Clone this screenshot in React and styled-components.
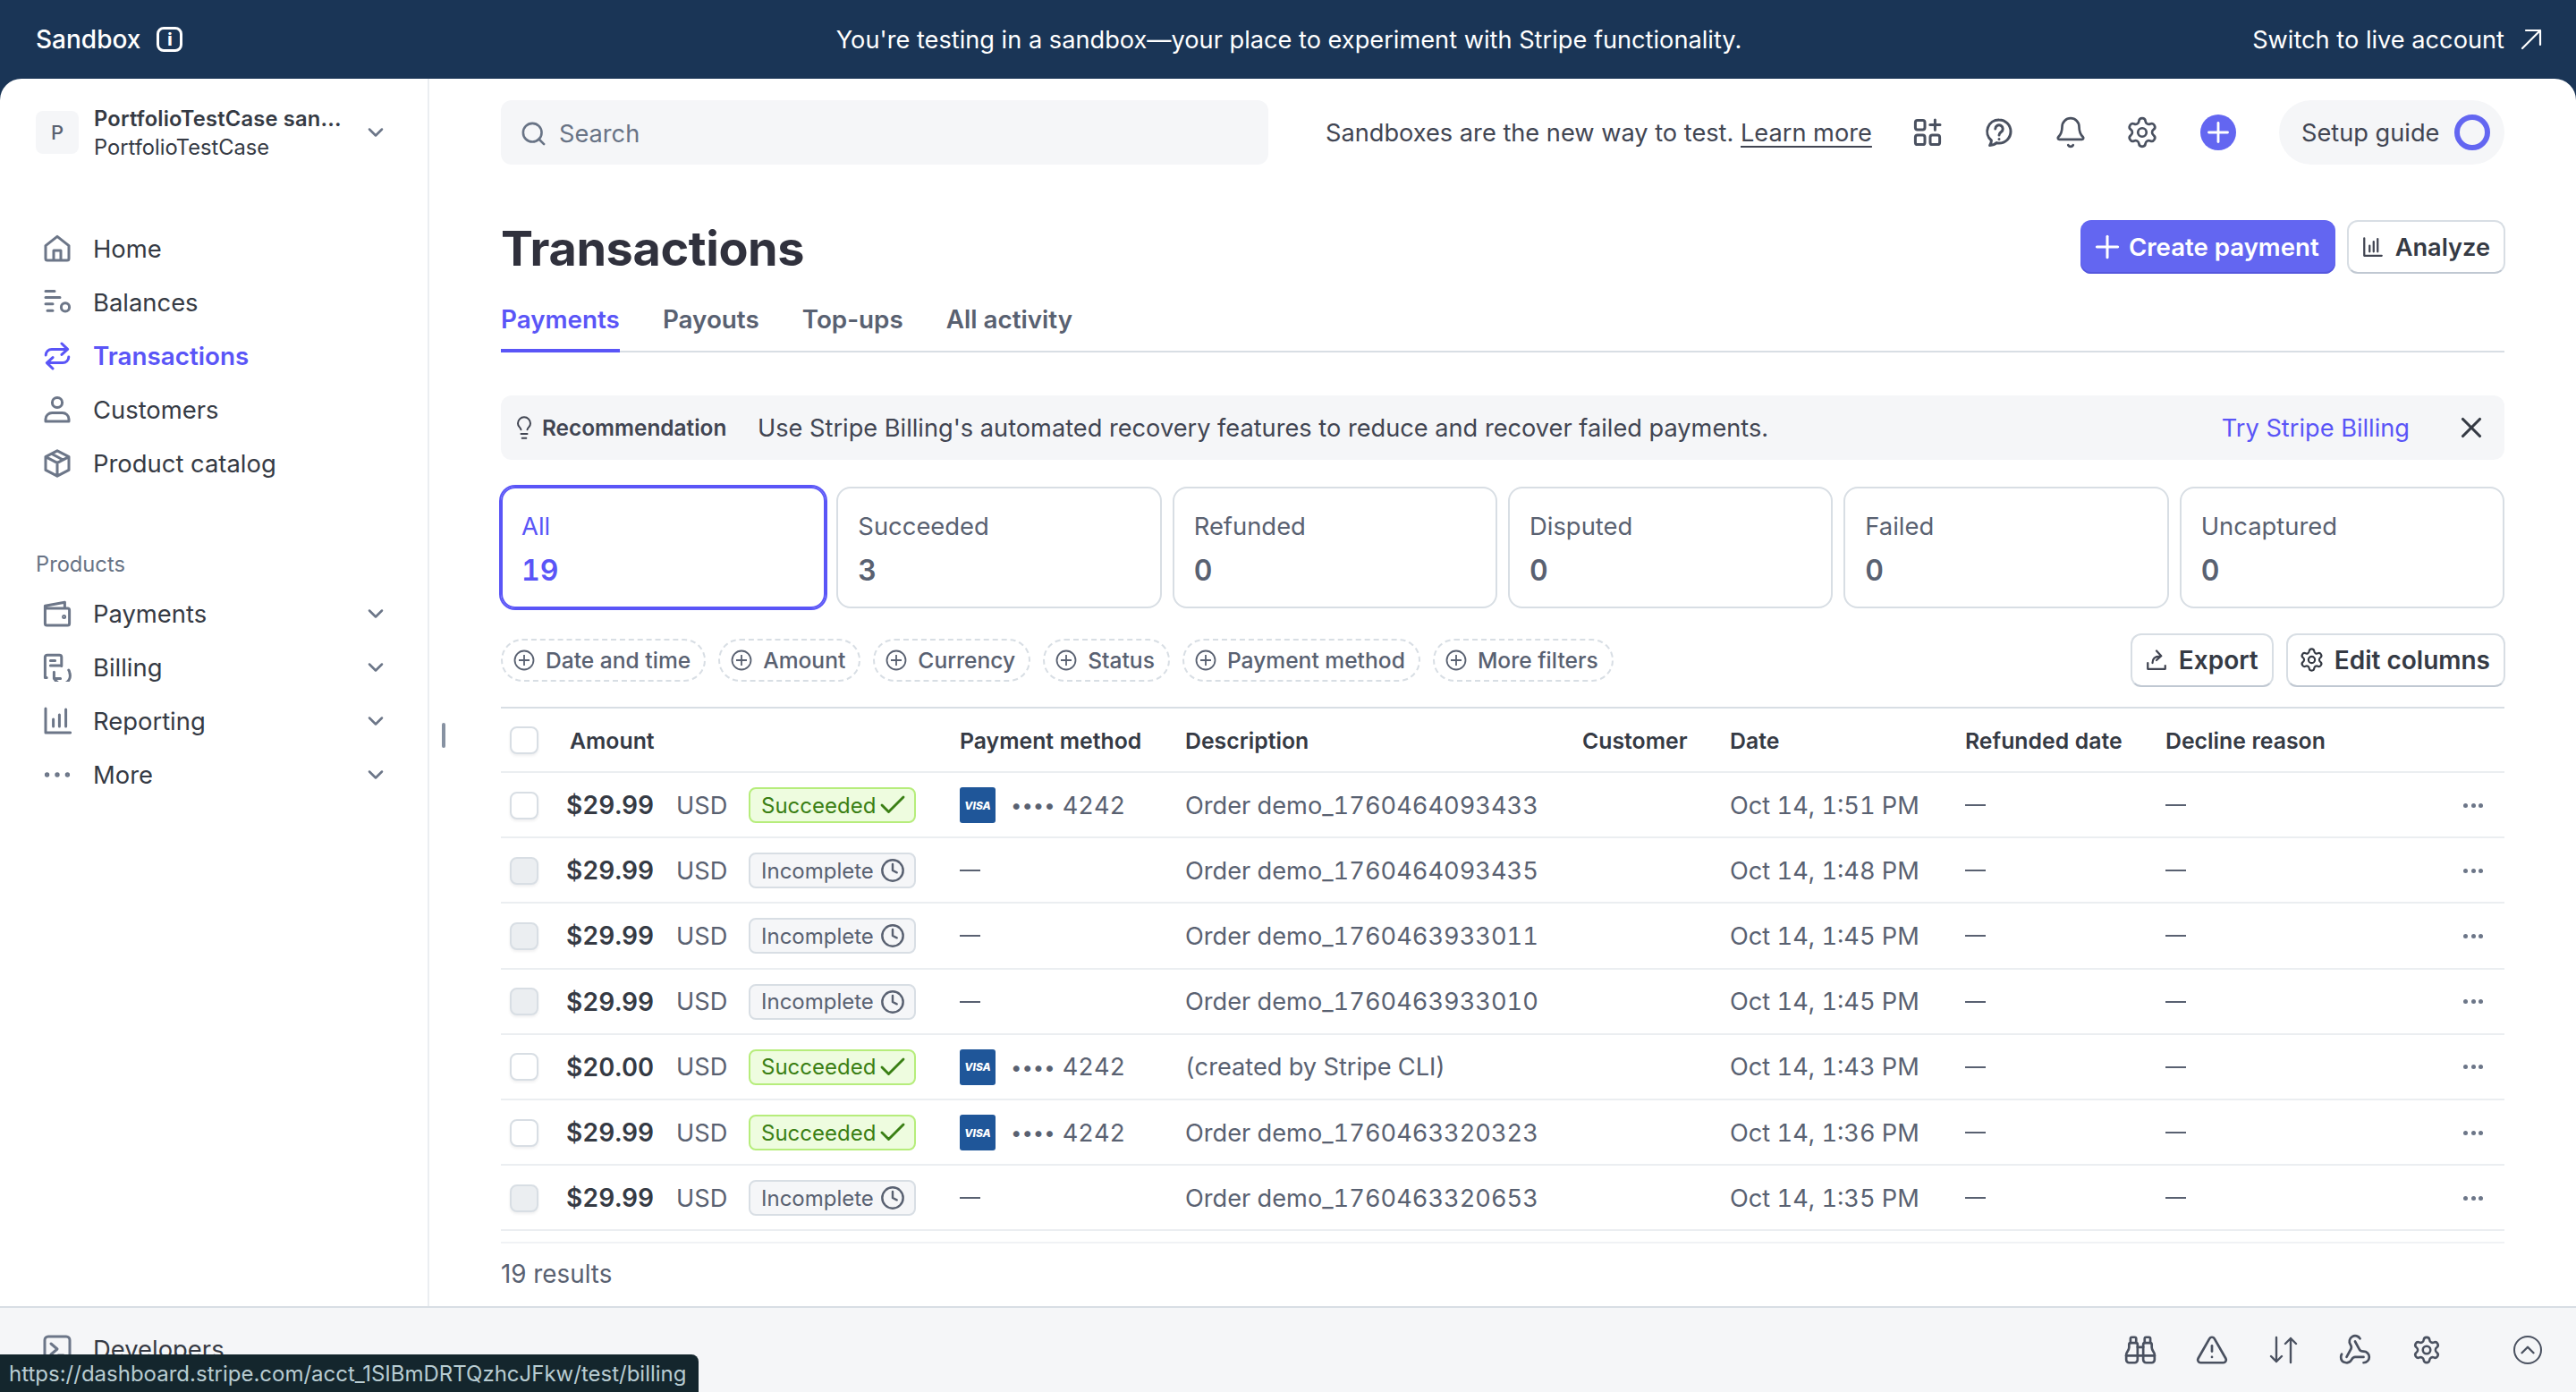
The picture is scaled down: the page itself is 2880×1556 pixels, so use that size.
import styled, { createGlobalStyle } from "styled-components";
import {
  Bell,
  Binoculars,
  Check,
  ChevronDown,
  ChevronUp,
  Clock,
  Lightbulb,
  Plus,
  Search,
  Settings,
  TriangleAlert,
  Webhook,
  X,
} from "lucide-react";

const GlobalStyle = createGlobalStyle`
  html, body {
    margin: 0;
    padding: 0;
    height: 100%;
    overflow: hidden;
    background: #1a3556;
  }
  body {
    font-family: Inter, "Liberation Sans", sans-serif;
    color: #353a44;
  }
  * {
    box-sizing: border-box;
  }
`;

const Page = styled.div`
  position: relative;
  display: flex;
  flex-direction: column;
  width: 2880px;
  height: 1556px;
  overflow: hidden;
`;

const TopBar = styled.header`
  display: grid;
  grid-template-columns: 1fr auto 1fr;
  align-items: center;
  height: 88px;
  padding: 0 38px 0 40px;
  color: #fff;
  font-size: 27.2px;
`;

const SandboxLabel = styled.div`
  display: flex;
  align-items: center;
  gap: 18px;
  font-weight: 500;
  font-size: 28px;
`;

const InfoBox = styled.span`
  display: flex;
  align-items: center;
  justify-content: center;
  width: 29px;
  height: 28px;
  border: 3px solid #fff;
  border-radius: 8px;
  font-size: 19px;
  font-weight: 800;
`;

const SwitchLink = styled.div`
  display: flex;
  justify-content: flex-end;
  align-items: center;
  gap: 18px;
  font-size: 27.2px;
`;

const Shell = styled.div`
  flex: 1;
  display: flex;
  min-height: 0;
  background: #fff;
  border-radius: 24px 24px 0 0;
`;

const Sidebar = styled.aside`
  flex: 0 0 480px;
  padding: 36px 40px 0;
  border-right: 2px solid #ebeef1;
`;

const Account = styled.div`
  display: flex;
  align-items: center;
  height: 48px;
  gap: 17px;
`;

const AccountTile = styled.div`
  display: flex;
  align-items: center;
  justify-content: center;
  flex: 0 0 48px;
  height: 48px;
  border-radius: 8px;
  background: #f5f6f8;
  color: #596171;
  font-size: 22px;
  font-weight: 500;
`;

const AccountText = styled.div`
  flex: 1;
  font-size: 23.7px;
  line-height: 32px;
  padding-top: 2px;
`;

const AccountName = styled.div`
  font-weight: 600;
  letter-spacing: 0.2px;
`;

const NavGroup = styled.nav`
  display: flex;
  flex-direction: column;
  margin-top: ${(p) => p.$top}px;
`;

const NavItem = styled.div`
  display: flex;
  align-items: center;
  height: 60px;
  padding-left: 8px;
  gap: 24px;
  font-size: ${(p) => (p.$active ? 27.8 : 27.4)}px;
  font-weight: ${(p) => (p.$active ? 600 : 400)};
  color: ${(p) => (p.$active ? "#5a55f7" : "#353a44")};
`;

const NavLabel = styled.span`
  flex: 1;
`;

const Glyph = styled.svg`
  flex: 0 0 ${(p) => p.$size}px;
  width: ${(p) => p.$size}px;
  height: ${(p) => p.$size}px;
  fill: none;
  stroke: ${(p) => (p.$active ? "#5a55f7" : p.$tone || "#6c7688")};
  stroke-width: 1.5;
  stroke-linecap: round;
  stroke-linejoin: round;
`;

// lucide glyphs have inner padding, so they sit oversized in a tight slot
const IconSlot = styled.span`
  display: flex;
  align-items: center;
  justify-content: center;
  flex: 0 0 ${(p) => p.$size}px;
  width: ${(p) => p.$size}px;
  height: ${(p) => p.$size}px;
  color: ${(p) => p.$tone || "inherit"};

  svg {
    flex: none;
  }
`;

const Chevron = styled(ChevronDown)`
  flex: none;
  color: #6c7688;
  margin-right: 4px;
`;

const SectionLabel = styled.div`
  margin-top: 67px;
  height: 32px;
  font-size: 23.7px;
  line-height: 32px;
  color: #687385;
`;

const ScrollHandle = styled.div`
  position: absolute;
  left: 494px;
  top: 808px;
  width: 4px;
  height: 28px;
  border-radius: 2px;
  background: #8792a2;
`;

const Content = styled.main`
  flex: 1;
  padding: 24px 80px 0;
  min-width: 0;
`;

const SearchRow = styled.div`
  display: flex;
  align-items: center;
  height: 72px;
`;

const SearchBox = styled.div`
  display: flex;
  align-items: center;
  gap: 16px;
  width: 858px;
  height: 72px;
  padding: 2px 23px 0;
  border-radius: 12px;
  background: #f5f6f8;
  color: #687385;
  font-size: 27.2px;
`;

const SandboxNote = styled.div`
  margin-left: 64px;
  padding-top: 1px;
  font-size: 27.2px;
  white-space: nowrap;
  color: #414552;
`;

const NoteLink = styled.span`
  text-decoration: underline;
  text-underline-offset: 5px;
`;

const HeaderIcons = styled.div`
  display: flex;
  align-items: center;
  gap: 48px;
  margin-left: 46px;
  color: #4a5160;
`;

const PlusCircle = styled.span`
  display: flex;
  align-items: center;
  justify-content: center;
  width: 40px;
  height: 40px;
  margin-left: 1px;
  border-radius: 50%;
  background: #6366f1;
  color: #fff;
`;

const SetupPill = styled.div`
  display: flex;
  align-items: center;
  justify-content: space-between;
  width: 252px;
  height: 72px;
  margin-left: auto;
  padding: 0 16px 0 25px;
  border-radius: 36px;
  background: #f5f6f8;
  font-size: 27.2px;
  color: #414552;
`;

const SetupRing = styled.span`
  width: 40px;
  height: 40px;
  border: 6px solid #6366f1;
  border-radius: 50%;
`;

const TitleRow = styled.div`
  display: flex;
  align-items: center;
  justify-content: space-between;
  margin-top: 62px;
  height: 60px;
`;

const Title = styled.h1`
  margin: 0;
  padding-top: 2px;
  font-size: 54px;
  font-weight: 700;
  letter-spacing: -0.4px;
  color: #30313d;
`;

const ButtonRow = styled.div`
  display: flex;
  gap: ${(p) => p.$gap}px;
  margin-right: -1px;
`;

const PrimaryButton = styled.button`
  display: flex;
  align-items: center;
  gap: 12px;
  height: 60px;
  padding: 0 18px;
  border: 0;
  border-radius: 12px;
  background: #6366f1;
  box-shadow: inset 0 -2px 0 #5557dd;
  color: #fff;
  font: 600 27.6px Inter, sans-serif;
`;

const GhostButton = styled.button`
  display: flex;
  align-items: center;
  gap: 13px;
  height: 60px;
  padding: 0 15px;
  border: 2px solid #d8dee4;
  border-bottom-color: #c0c8d2;
  border-radius: 12px;
  background: #fff;
  color: #353a44;
  font: 600 ${(p) => p.$font || 27.2}px Inter, sans-serif;
`;

const Tabs = styled.div`
  display: flex;
  gap: 48px;
  height: 64px;
  margin-top: 24px;
  border-bottom: 2px solid #d8dee4;
`;

const Tab = styled.div`
  height: 64px;
  padding-top: 10px;
  font-size: 27.8px;
  font-weight: 600;
  color: ${(p) => (p.$active ? "#5a55f7" : "#596171")};
  border-bottom: 4px solid ${(p) => (p.$active ? "#5a55f7" : "transparent")};
`;

const Banner = styled.div`
  display: flex;
  align-items: center;
  height: 72px;
  margin-top: 48px;
  padding: 0 22px 0 14px;
  border-radius: 12px;
  background: #f5f6f8;
  font-size: 27.2px;
  color: #414552;
`;

const BannerTag = styled.span`
  display: flex;
  align-items: center;
  gap: 8px;
  width: 273px;
  font-size: 24.4px;
  font-weight: 600;
`;

const BannerText = styled.span`
  flex: 1;
`;

const BannerLink = styled.span`
  margin-right: 54px;
  color: #5a55f7;
`;

const Cards = styled.div`
  display: grid;
  grid-template-columns: repeat(6, 1fr);
  gap: 12px;
  margin-top: 30px;
`;

const Card = styled.div`
  height: 136px;
  padding: 25px ${(p) => (p.$active ? 21 : 22)}px;
  border: 2px solid ${(p) => (p.$active ? "#5a55f7" : "#d8dee4")};
  border-radius: 16px;
  box-shadow: ${(p) => (p.$active ? "0 0 0 2px #5a55f7" : "none")};
  color: ${(p) => (p.$active ? "#5a55f7" : "#596171")};
`;

const CardLabel = styled.div`
  font-size: 27.4px;
  line-height: 34px;
`;

const CardValue = styled.div`
  margin-top: 14px;
  font-size: 32px;
  line-height: 38px;
  font-weight: 600;
  font-variant-numeric: tabular-nums;
  color: ${(p) => (p.$active ? "#5a55f7" : "#596171")};
`;

const FilterRow = styled.div`
  display: flex;
  align-items: center;
  justify-content: space-between;
  height: 59px;
  margin-top: 28px;
`;

const Filters = styled.div`
  display: flex;
  gap: 14px;
`;

const FilterChip = styled.div`
  display: flex;
  align-items: center;
  gap: 12px;
  height: 48px;
  padding: 0 15px 0 12px;
  border: 2px dashed #d8dee4;
  border-radius: 24px;
  font-size: 24.6px;
  font-weight: 500;
  color: #596171;
`;

const TableWrap = styled.div`
  margin-top: 23px;
  border-top: 2px solid #d8dee4;
`;

const TableRow = styled.div`
  display: grid;
  grid-template-columns: 73px 440px 252px 444px 165px 263px 224px 1fr 62px;
  align-items: center;
  height: ${(p) => (p.$head ? "72px" : "73.2px")};
  padding-top: 1px;
  border-bottom: 2px solid #ebeef1;
  font-size: 27.2px;
  font-variant-numeric: tabular-nums;
  color: #596171;
`;

const HeadCell = styled.div`
  padding-top: 1px;
  padding-left: ${(p) => (p.$pad ? 4 : 0)}px;
  font-size: 24.8px;
  font-weight: 600;
  color: #353a44;
`;

const CheckBox = styled.span`
  display: block;
  width: 32px;
  height: 31px;
  margin-left: 10px;
  border: 2px solid #d8dee4;
  border-radius: 8px;
  background: ${(p) => (p.$muted ? "#ebeef1" : "#fff")};
  box-shadow: 0 2px 3px rgba(48, 49, 61, 0.08);
`;

const AmountCell = styled.div`
  display: flex;
  align-items: center;
`;

const Money = styled.span`
  flex: 0 0 123px;
  font-size: 28px;
  font-weight: 600;
  color: #353a44;
`;

const Currency = styled.span`
  flex: 0 0 81px;
  color: #596171;
`;

const Badge = styled.span`
  display: flex;
  align-items: center;
  justify-content: space-between;
  width: 187px;
  height: 40px;
  padding: 0 12px;
  border-radius: 8px;
  font-size: 24px;
  color: ${(p) => (p.$ok ? "#3a7f14" : "#596171")};
  background: ${(p) => (p.$ok ? "#eefcdf" : "#f5f6f8")};
  border: 2px solid ${(p) => (p.$ok ? "#b6ed7b" : "#d8dee4")};
`;

const MethodCell = styled.div`
  display: flex;
  align-items: center;
`;

const VisaTile = styled.span`
  display: flex;
  align-items: center;
  justify-content: center;
  width: 40px;
  height: 40px;
  margin-right: 18px;
  border-radius: 3px;
  background: #1f5699;
  color: #fff;
  font-size: 12px;
  font-weight: 800;
  font-style: italic;
`;

const CardDots = styled.span`
  margin-right: 7px;
  letter-spacing: 2px;
  font-size: 22px;
  font-weight: 700;
`;

const Dash = styled.span`
  display: block;
  width: ${(p) => p.$w}px;
  height: 2px;
  background: #596171;
`;

const RowMenu = styled.div`
  display: flex;
  gap: 3.5px;
  justify-content: flex-end;
  padding-right: 24px;
`;

const RowDot = styled.i`
  width: 5px;
  height: 5px;
  border-radius: 50%;
  background: #6c7688;
`;

const ResultsLine = styled.div`
  height: 2px;
  margin-top: 12px;
  background: #f0f2f5;
`;

const Results = styled.div`
  margin-top: 17px;
  font-size: 27.8px;
  line-height: 34px;
  color: #596171;
`;

const Footer = styled.footer`
  display: flex;
  align-items: center;
  flex: 0 0 96px;
  padding: 0 38px 0 48px;
  border-top: 2px solid #d8dee4;
  background: #f5f6f8;
`;

const DevLink = styled.div`
  display: flex;
  align-items: center;
  gap: 24px;
  flex: 1;
  padding-bottom: 3px;
  font-size: 27.4px;
  color: #353a44;
`;

const FooterIcons = styled.div`
  display: flex;
  align-items: center;
  gap: 48px;
  color: #4a5160;
`;

const RoundUp = styled.span`
  display: flex;
  align-items: center;
  justify-content: center;
  width: 32px;
  height: 32px;
  margin-left: 33px;
  border: 2.5px solid #4a5160;
  border-radius: 50%;
`;

const StatusBubble = styled.div`
  position: absolute;
  left: 0;
  bottom: 0;
  width: 781px;
  height: 42px;
  padding-left: 10px;
  overflow: hidden;
  border-radius: 0 8px 0 0;
  background: #14262d;
  color: #b8ccd2;
  font-size: 24px;
  line-height: 44px;
  white-space: nowrap;
`;

const Svg = ({ children, active, size = 32, tone }) => (
  <Glyph viewBox="0 0 16 16" $active={active} $size={size} $tone={tone}>
    {children}
  </Glyph>
);

const HomeIcon = () => (
  <Svg>
    <path d="M1.5 6.3 8 1.2l6.5 5.1v7.2a1 1 0 0 1-1 1h-11a1 1 0 0 1-1-1zM6 14.5V9h4v5.5" />
  </Svg>
);

const BalancesIcon = () => (
  <Svg>
    <path d="M1.5 1.7h5M1.5 5.3h8M1.5 8.9h4M2.5 12.6h3" />
    <circle cx="12.5" cy="10.7" r="2.3" />
  </Svg>
);

const TransactionsIcon = () => (
  <Svg active>
    <path d="M10.5 1 13.8 4.2l-3.3 3M13.6 4.2H5A3.3 3.3 0 0 0 1.6 7.5M5.5 15 2.2 11.8l3.3-3M2.4 11.8H11a3.3 3.3 0 0 0 3.4-3.3" />
  </Svg>
);

const CustomersIcon = () => (
  <Svg>
    <circle cx="8" cy="4" r="2.8" />
    <path d="M1.5 13.2c0-2 1.7-3.4 3.6-3.4h5.8c1.9 0 3.6 1.4 3.6 3.4v1.3h-13z" />
  </Svg>
);

const CatalogIcon = () => (
  <Svg>
    <path d="M8 .9l6.5 3.4v7.4L8 15.1l-6.5-3.4V4.3zM1.5 4.3 8 7.7l6.5-3.4M8 7.7v7.4M4.8 2.6l6.4 3.4" />
  </Svg>
);

const PaymentsIcon = () => (
  <Svg>
    <path d="M1.2 5V13.5a1 1 0 0 0 1 1h11.6a1 1 0 0 0 1-1V6a1 1 0 0 0-1-1zM1.2 5V3.6L12.2 1.6V5" />
    <circle cx="11.8" cy="9.8" r=".5" />
  </Svg>
);

const BillingIcon = () => (
  <Svg>
    <path d="M1.2 13.8V2.3a1.2 1.2 0 0 1 1.2-1.2h6.8a1.2 1.2 0 0 1 1.2 1.2v4.9M1.2 13.8h.9M4.2 4.3h2.6M4.2 7h5.2M6.2 10.6v3.7h3.6M6.4 14a4.2 4.2 0 0 0 8.6-2.6 4 4 0 0 0-.6-1.9" />
  </Svg>
);

const ReportingIcon = () => (
  <Svg>
    <path d="M1.5 1v13.5h13.8M5.8 7v4M9.2 4.5V11M12.8 1.5V11" />
  </Svg>
);

const MoreIcon = () => (
  <Svg>
    <circle cx="2.3" cy="8" r=".6" />
    <circle cx="8" cy="8" r=".6" />
    <circle cx="13.7" cy="8" r=".6" />
  </Svg>
);

const TerminalIcon = () => (
  <Svg>
    <rect x="1" y="1" width="14" height="14" rx="2" />
    <path d="M4.5 5 8 8l-3.5 3M8.5 11.5h3" />
  </Svg>
);

const AddAppsIcon = () => (
  <Svg tone="#4a5160">
    <rect x="1.2" y="1.2" width="5.3" height="5.3" rx="1.2" />
    <rect x="1.2" y="9.5" width="5.3" height="5.3" rx="1.2" />
    <rect x="9.5" y="9.5" width="5.3" height="5.3" rx="1.2" />
    <path d="M12.2 1v5.6M9.4 3.8h5.6" />
  </Svg>
);

const HelpIcon = () => (
  <Svg tone="#4a5160">
    <path d="M8 1a6.5 6.5 0 0 1 0 13c-.5 0-1 0-1.4-.2-.8.9-2.3 1.4-3.8 1.4.6-.7.9-1.6.9-2.7A6.5 6.5 0 0 1 8 1z" />
    <path d="M5.9 6a2.1 2.1 0 1 1 3.2 1.8C8.3 8.3 8 8.8 8 9.5M8 11.7v.1" />
  </Svg>
);

const ChartIcon = () => (
  <Svg size={24} tone="#414552">
    <path d="M1.5 1.5v13h13M5.5 7v4.5M8.5 4v7.5M11.5 2v9.5" />
  </Svg>
);

const ExportIcon = () => (
  <Svg size={24} tone="#414552">
    <path d="M1.5 10v4.5h13V12M5 10c0-3.2 2-5 5.5-5M8 1l3.5 3.8L8 8" />
  </Svg>
);

const SwitchArrow = () => (
  <svg width="24" height="24" viewBox="0 0 24 24" fill="none" stroke="#fff" strokeWidth="2.2" strokeLinecap="round" strokeLinejoin="round">
    <path d="M2 22 22 2M6 2h16v16" />
  </svg>
);

const filters = ["Date and time", "Amount", "Currency", "Status", "Payment method", "More filters"];
const cards = [
  ["All", 19],
  ["Succeeded", 3],
  ["Refunded", 0],
  ["Disputed", 0],
  ["Failed", 0],
  ["Uncaptured", 0],
];
const mainNav = [
  ["Home", HomeIcon],
  ["Balances", BalancesIcon],
  ["Transactions", TransactionsIcon, true],
  ["Customers", CustomersIcon],
  ["Product catalog", CatalogIcon],
];
const productNav = [
  ["Payments", PaymentsIcon],
  ["Billing", BillingIcon],
  ["Reporting", ReportingIcon],
  ["More", MoreIcon],
];
const rows = [
  { amount: "$29.99", ok: true, desc: "Order demo_1760464093433", date: "Oct 14, 1:51 PM" },
  { amount: "$29.99", ok: false, desc: "Order demo_1760464093435", date: "Oct 14, 1:48 PM" },
  { amount: "$29.99", ok: false, desc: "Order demo_1760463933011", date: "Oct 14, 1:45 PM" },
  { amount: "$29.99", ok: false, desc: "Order demo_1760463933010", date: "Oct 14, 1:45 PM" },
  { amount: "$20.00", ok: true, desc: "(created by Stripe CLI)", date: "Oct 14, 1:43 PM" },
  { amount: "$29.99", ok: true, desc: "Order demo_1760463320323", date: "Oct 14, 1:36 PM" },
  { amount: "$29.99", ok: false, desc: "Order demo_1760463320653", date: "Oct 14, 1:35 PM" },
];

const App = () => {
  return (
    <Page>
      <GlobalStyle />
      <TopBar>
        <SandboxLabel>
          Sandbox
          <InfoBox>i</InfoBox>
        </SandboxLabel>
        <div>You're testing in a sandbox—your place to experiment with Stripe functionality.</div>
        <SwitchLink>
          Switch to live account
          <SwitchArrow />
        </SwitchLink>
      </TopBar>

      <Shell>
        <Sidebar>
          <Account>
            <AccountTile>P</AccountTile>
            <AccountText>
              <AccountName>PortfolioTestCase san...</AccountName>
              <div>PortfolioTestCase</div>
            </AccountText>
            <Chevron size={28} strokeWidth={2.2} />
          </Account>
          <NavGroup $top={76}>
            {mainNav.map(([label, Icon, active]) => (
              <NavItem key={label} $active={active}>
                <Icon />
                <NavLabel>{label}</NavLabel>
              </NavItem>
            ))}
          </NavGroup>
          <SectionLabel>Products</SectionLabel>
          <NavGroup $top={9}>
            {productNav.map(([label, Icon]) => (
              <NavItem key={label}>
                <Icon />
                <NavLabel>{label}</NavLabel>
                <Chevron size={28} strokeWidth={2.2} />
              </NavItem>
            ))}
          </NavGroup>
        </Sidebar>

        <Content>
          <SearchRow>
            <SearchBox>
              <IconSlot $size={26}>
                <Search size={31} strokeWidth={2} />
              </IconSlot>
              Search
            </SearchBox>
            <SandboxNote>
              Sandboxes are the new way to test. <NoteLink>Learn more</NoteLink>
            </SandboxNote>
            <HeaderIcons>
              <AddAppsIcon />
              <HelpIcon />
              <IconSlot $size={32}>
                <Bell size={38} strokeWidth={1.7} />
              </IconSlot>
              <IconSlot $size={32}>
                <Settings size={38} strokeWidth={1.7} />
              </IconSlot>
              <PlusCircle>
                <Plus size={36} strokeWidth={1.9} />
              </PlusCircle>
            </HeaderIcons>
            <SetupPill>
              Setup guide
              <SetupRing />
            </SetupPill>
          </SearchRow>

          <TitleRow>
            <Title>Transactions</Title>
            <ButtonRow $gap={13}>
              <PrimaryButton>
                <IconSlot $size={24}>
                  <Plus size={40} strokeWidth={1.8} />
                </IconSlot>
                Create payment
              </PrimaryButton>
              <GhostButton>
                <ChartIcon />
                Analyze
              </GhostButton>
            </ButtonRow>
          </TitleRow>

          <Tabs>
            <Tab $active>Payments</Tab>
            <Tab>Payouts</Tab>
            <Tab>Top-ups</Tab>
            <Tab>All activity</Tab>
          </Tabs>

          <Banner>
            <BannerTag>
              <IconSlot $size={24}>
                <Lightbulb size={28} strokeWidth={1.7} />
              </IconSlot>
              Recommendation
            </BannerTag>
            <BannerText>
              Use Stripe Billing's automated recovery features to reduce and recover failed payments.
            </BannerText>
            <BannerLink>Try Stripe Billing</BannerLink>
            <IconSlot $size={30} $tone="#353a44">
              <X size={38} strokeWidth={2} />
            </IconSlot>
          </Banner>

          <Cards>
            {cards.map(([label, value], i) => (
              <Card key={label} $active={i === 0}>
                <CardLabel>{label}</CardLabel>
                <CardValue $active={i === 0}>{value}</CardValue>
              </Card>
            ))}
          </Cards>

          <FilterRow>
            <Filters>
              {filters.map((f) => (
                <FilterChip key={f}>
                  <svg width="24" height="24" viewBox="0 0 16 16" fill="none" stroke="#596171" strokeWidth="1.2">
                    <circle cx="8" cy="8" r="7" />
                    <path d="M8 4v8M4 8h8" />
                  </svg>
                  {f}
                </FilterChip>
              ))}
            </Filters>
            <ButtonRow $gap={14}>
              <GhostButton $font={28}>
                <ExportIcon />
                Export
              </GhostButton>
              <GhostButton $font={28}>
                <IconSlot $size={24}>
                  <Settings size={29} strokeWidth={1.8} />
                </IconSlot>
                Edit columns
              </GhostButton>
            </ButtonRow>
          </FilterRow>

          <TableWrap>
            <TableRow $head>
              <CheckBox />
              <HeadCell $pad>Amount</HeadCell>
              <HeadCell>Payment method</HeadCell>
              <HeadCell>Description</HeadCell>
              <HeadCell>Customer</HeadCell>
              <HeadCell>Date</HeadCell>
              <HeadCell>Refunded date</HeadCell>
              <HeadCell>Decline reason</HeadCell>
              <span />
            </TableRow>
            {rows.map((row) => (
              <TableRow key={row.desc}>
                <CheckBox $muted={!row.ok} />
                <AmountCell>
                  <Money>{row.amount}</Money>
                  <Currency>USD</Currency>
                  <Badge $ok={row.ok}>
                    {row.ok ? "Succeeded" : "Incomplete"}
                    {row.ok ? (
                      <IconSlot $size={24}>
                        <Check size={36} strokeWidth={1.9} />
                      </IconSlot>
                    ) : (
                      <IconSlot $size={24}>
                        <Clock size={28} strokeWidth={2.1} />
                      </IconSlot>
                    )}
                  </Badge>
                </AmountCell>
                <MethodCell>
                  {row.ok ? (
                    <>
                      <VisaTile>VISA</VisaTile>
                      <CardDots>••••</CardDots>
                      4242
                    </>
                  ) : (
                    <Dash $w={23} />
                  )}
                </MethodCell>
                <div>{row.desc}</div>
                <div />
                <div>{row.date}</div>
                <Dash $w={23} />
                <Dash $w={23} />
                <RowMenu>
                  <RowDot />
                  <RowDot />
                  <RowDot />
                </RowMenu>
              </TableRow>
            ))}
          </TableWrap>
          <ResultsLine />
          <Results>19 results</Results>
        </Content>
      </Shell>

      <ScrollHandle />

      <Footer>
        <DevLink>
          <TerminalIcon />
          Developers
        </DevLink>
        <FooterIcons>
          <IconSlot $size={32}>
            <Binoculars size={38} strokeWidth={1.7} />
          </IconSlot>
          <IconSlot $size={32}>
            <TriangleAlert size={38} strokeWidth={1.7} />
          </IconSlot>
          <svg width="32" height="32" viewBox="0 0 16 16" fill="none" stroke="currentColor" strokeWidth="1.2" strokeLinecap="round" strokeLinejoin="round">
            <path d="M4 1v13.5M1 11.5l3 3 3-3M12 15V1.5M9 4.5l3-3 3 3" />
          </svg>
          <IconSlot $size={32}>
            <Webhook size={38} strokeWidth={1.7} />
          </IconSlot>
          <IconSlot $size={32}>
            <Settings size={34} strokeWidth={1.8} />
          </IconSlot>
          <RoundUp>
            <ChevronUp size={26} strokeWidth={2.2} />
          </RoundUp>
        </FooterIcons>
      </Footer>

      <StatusBubble>https://dashboard.stripe.com/acct_1SIBmDRTQzhcJFkw/test/billing</StatusBubble>
    </Page>
  );
};

export default App;
